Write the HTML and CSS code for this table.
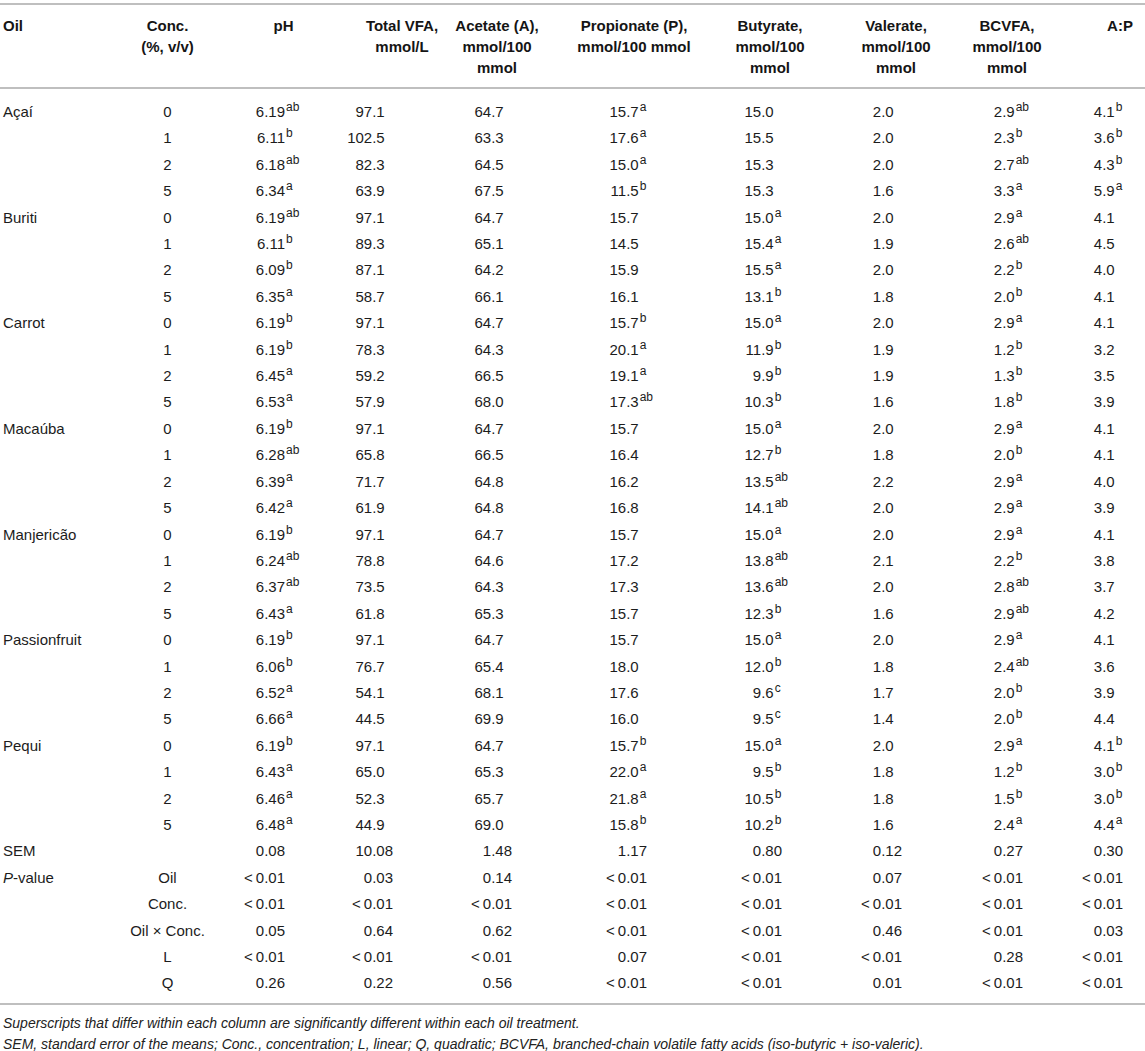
FILE: index.html
```html
<!DOCTYPE html>
<html lang="en">
<head>
<meta charset="utf-8">
<title>Table</title>
<link rel="stylesheet" href="styles.css">
</head>
<body>
<div class="wrap">
<table class="tbl">
<colgroup>
<col class="w-oil"><col class="w-conc"><col class="w-ph"><col class="w-tvfa"><col class="w-ac"><col class="w-pr"><col class="w-bu"><col class="w-va"><col class="w-bc"><col class="w-ap">
</colgroup>
<thead>
<tr>
<th>Oil</th>
<th>Conc.<br>(%, v/v)</th>
<th>pH</th>
<th>Total VFA,<br>mmol/L</th>
<th>Acetate (A),<br>mmol/100<br>mmol</th>
<th>Propionate (P),<br>mmol/100 mmol</th>
<th>Butyrate,<br>mmol/100<br>mmol</th>
<th>Valerate,<br>mmol/100<br>mmol</th>
<th>BCVFA,<br>mmol/100<br>mmol</th>
<th>A:P</th>
</tr>
</thead>
<tbody>
<tr class="d first"><td>Açaí</td><td>0</td><td><span class="n">6.19<sup>ab</sup></span></td><td>97.1</td><td>64.7</td><td><span class="n">15.7<sup>a</sup></span></td><td>15.0</td><td>2.0</td><td><span class="n">2.9<sup>ab</sup></span></td><td><span class="n">4.1<sup>b</sup></span></td></tr>
<tr class="d"><td></td><td>1</td><td><span class="n">6.11<sup>b</sup></span></td><td>102.5</td><td>63.3</td><td><span class="n">17.6<sup>a</sup></span></td><td>15.5</td><td>2.0</td><td><span class="n">2.3<sup>b</sup></span></td><td><span class="n">3.6<sup>b</sup></span></td></tr>
<tr class="d"><td></td><td>2</td><td><span class="n">6.18<sup>ab</sup></span></td><td>82.3</td><td>64.5</td><td><span class="n">15.0<sup>a</sup></span></td><td>15.3</td><td>2.0</td><td><span class="n">2.7<sup>ab</sup></span></td><td><span class="n">4.3<sup>b</sup></span></td></tr>
<tr class="d"><td></td><td>5</td><td><span class="n">6.34<sup>a</sup></span></td><td>63.9</td><td>67.5</td><td><span class="n">11.5<sup>b</sup></span></td><td>15.3</td><td>1.6</td><td><span class="n">3.3<sup>a</sup></span></td><td><span class="n">5.9<sup>a</sup></span></td></tr>

<tr class="d"><td>Buriti</td><td>0</td><td><span class="n">6.19<sup>ab</sup></span></td><td>97.1</td><td>64.7</td><td>15.7</td><td><span class="n">15.0<sup>a</sup></span></td><td>2.0</td><td><span class="n">2.9<sup>a</sup></span></td><td>4.1</td></tr>
<tr class="d"><td></td><td>1</td><td><span class="n">6.11<sup>b</sup></span></td><td>89.3</td><td>65.1</td><td>14.5</td><td><span class="n">15.4<sup>a</sup></span></td><td>1.9</td><td><span class="n">2.6<sup>ab</sup></span></td><td>4.5</td></tr>
<tr class="d"><td></td><td>2</td><td><span class="n">6.09<sup>b</sup></span></td><td>87.1</td><td>64.2</td><td>15.9</td><td><span class="n">15.5<sup>a</sup></span></td><td>2.0</td><td><span class="n">2.2<sup>b</sup></span></td><td>4.0</td></tr>
<tr class="d"><td></td><td>5</td><td><span class="n">6.35<sup>a</sup></span></td><td>58.7</td><td>66.1</td><td>16.1</td><td><span class="n">13.1<sup>b</sup></span></td><td>1.8</td><td><span class="n">2.0<sup>b</sup></span></td><td>4.1</td></tr>

<tr class="d"><td>Carrot</td><td>0</td><td><span class="n">6.19<sup>b</sup></span></td><td>97.1</td><td>64.7</td><td><span class="n">15.7<sup>b</sup></span></td><td><span class="n">15.0<sup>a</sup></span></td><td>2.0</td><td><span class="n">2.9<sup>a</sup></span></td><td>4.1</td></tr>
<tr class="d"><td></td><td>1</td><td><span class="n">6.19<sup>b</sup></span></td><td>78.3</td><td>64.3</td><td><span class="n">20.1<sup>a</sup></span></td><td><span class="n">11.9<sup>b</sup></span></td><td>1.9</td><td><span class="n">1.2<sup>b</sup></span></td><td>3.2</td></tr>
<tr class="d"><td></td><td>2</td><td><span class="n">6.45<sup>a</sup></span></td><td>59.2</td><td>66.5</td><td><span class="n">19.1<sup>a</sup></span></td><td><span class="n">9.9<sup>b</sup></span></td><td>1.9</td><td><span class="n">1.3<sup>b</sup></span></td><td>3.5</td></tr>
<tr class="d"><td></td><td>5</td><td><span class="n">6.53<sup>a</sup></span></td><td>57.9</td><td>68.0</td><td><span class="n">17.3<sup>ab</sup></span></td><td><span class="n">10.3<sup>b</sup></span></td><td>1.6</td><td><span class="n">1.8<sup>b</sup></span></td><td>3.9</td></tr>

<tr class="d"><td>Macaúba</td><td>0</td><td><span class="n">6.19<sup>b</sup></span></td><td>97.1</td><td>64.7</td><td>15.7</td><td><span class="n">15.0<sup>a</sup></span></td><td>2.0</td><td><span class="n">2.9<sup>a</sup></span></td><td>4.1</td></tr>
<tr class="d"><td></td><td>1</td><td><span class="n">6.28<sup>ab</sup></span></td><td>65.8</td><td>66.5</td><td>16.4</td><td><span class="n">12.7<sup>b</sup></span></td><td>1.8</td><td><span class="n">2.0<sup>b</sup></span></td><td>4.1</td></tr>
<tr class="d"><td></td><td>2</td><td><span class="n">6.39<sup>a</sup></span></td><td>71.7</td><td>64.8</td><td>16.2</td><td><span class="n">13.5<sup>ab</sup></span></td><td>2.2</td><td><span class="n">2.9<sup>a</sup></span></td><td>4.0</td></tr>
<tr class="d"><td></td><td>5</td><td><span class="n">6.42<sup>a</sup></span></td><td>61.9</td><td>64.8</td><td>16.8</td><td><span class="n">14.1<sup>ab</sup></span></td><td>2.0</td><td><span class="n">2.9<sup>a</sup></span></td><td>3.9</td></tr>

<tr class="d"><td>Manjericão</td><td>0</td><td><span class="n">6.19<sup>b</sup></span></td><td>97.1</td><td>64.7</td><td>15.7</td><td><span class="n">15.0<sup>a</sup></span></td><td>2.0</td><td><span class="n">2.9<sup>a</sup></span></td><td>4.1</td></tr>
<tr class="d"><td></td><td>1</td><td><span class="n">6.24<sup>ab</sup></span></td><td>78.8</td><td>64.6</td><td>17.2</td><td><span class="n">13.8<sup>ab</sup></span></td><td>2.1</td><td><span class="n">2.2<sup>b</sup></span></td><td>3.8</td></tr>
<tr class="d"><td></td><td>2</td><td><span class="n">6.37<sup>ab</sup></span></td><td>73.5</td><td>64.3</td><td>17.3</td><td><span class="n">13.6<sup>ab</sup></span></td><td>2.0</td><td><span class="n">2.8<sup>ab</sup></span></td><td>3.7</td></tr>
<tr class="d"><td></td><td>5</td><td><span class="n">6.43<sup>a</sup></span></td><td>61.8</td><td>65.3</td><td>15.7</td><td><span class="n">12.3<sup>b</sup></span></td><td>1.6</td><td><span class="n">2.9<sup>ab</sup></span></td><td>4.2</td></tr>

<tr class="d"><td>Passionfruit</td><td>0</td><td><span class="n">6.19<sup>b</sup></span></td><td>97.1</td><td>64.7</td><td>15.7</td><td><span class="n">15.0<sup>a</sup></span></td><td>2.0</td><td><span class="n">2.9<sup>a</sup></span></td><td>4.1</td></tr>
<tr class="d"><td></td><td>1</td><td><span class="n">6.06<sup>b</sup></span></td><td>76.7</td><td>65.4</td><td>18.0</td><td><span class="n">12.0<sup>b</sup></span></td><td>1.8</td><td><span class="n">2.4<sup>ab</sup></span></td><td>3.6</td></tr>
<tr class="d"><td></td><td>2</td><td><span class="n">6.52<sup>a</sup></span></td><td>54.1</td><td>68.1</td><td>17.6</td><td><span class="n">9.6<sup>c</sup></span></td><td>1.7</td><td><span class="n">2.0<sup>b</sup></span></td><td>3.9</td></tr>
<tr class="d"><td></td><td>5</td><td><span class="n">6.66<sup>a</sup></span></td><td>44.5</td><td>69.9</td><td>16.0</td><td><span class="n">9.5<sup>c</sup></span></td><td>1.4</td><td><span class="n">2.0<sup>b</sup></span></td><td>4.4</td></tr>

<tr class="d"><td>Pequi</td><td>0</td><td><span class="n">6.19<sup>b</sup></span></td><td>97.1</td><td>64.7</td><td><span class="n">15.7<sup>b</sup></span></td><td><span class="n">15.0<sup>a</sup></span></td><td>2.0</td><td><span class="n">2.9<sup>a</sup></span></td><td><span class="n">4.1<sup>b</sup></span></td></tr>
<tr class="d"><td></td><td>1</td><td><span class="n">6.43<sup>a</sup></span></td><td>65.0</td><td>65.3</td><td><span class="n">22.0<sup>a</sup></span></td><td><span class="n">9.5<sup>b</sup></span></td><td>1.8</td><td><span class="n">1.2<sup>b</sup></span></td><td><span class="n">3.0<sup>b</sup></span></td></tr>
<tr class="d"><td></td><td>2</td><td><span class="n">6.46<sup>a</sup></span></td><td>52.3</td><td>65.7</td><td><span class="n">21.8<sup>a</sup></span></td><td><span class="n">10.5<sup>b</sup></span></td><td>1.8</td><td><span class="n">1.5<sup>b</sup></span></td><td><span class="n">3.0<sup>b</sup></span></td></tr>
<tr class="d"><td></td><td>5</td><td><span class="n">6.48<sup>a</sup></span></td><td>44.9</td><td>69.0</td><td><span class="n">15.8<sup>b</sup></span></td><td><span class="n">10.2<sup>b</sup></span></td><td>1.6</td><td><span class="n">2.4<sup>a</sup></span></td><td><span class="n">4.4<sup>a</sup></span></td></tr>

<tr class="s"><td>SEM</td><td></td><td>0.08</td><td>10.08</td><td>1.48</td><td>1.17</td><td>0.80</td><td>0.12</td><td>0.27</td><td>0.30</td></tr>
<tr class="s"><td><i>P</i>-value</td><td>Oil</td><td>&lt;&#8201;0.01</td><td>0.03</td><td>0.14</td><td>&lt;&#8201;0.01</td><td>&lt;&#8201;0.01</td><td>0.07</td><td>&lt;&#8201;0.01</td><td>&lt;&#8201;0.01</td></tr>
<tr class="s"><td></td><td>Conc.</td><td>&lt;&#8201;0.01</td><td>&lt;&#8201;0.01</td><td>&lt;&#8201;0.01</td><td>&lt;&#8201;0.01</td><td>&lt;&#8201;0.01</td><td>&lt;&#8201;0.01</td><td>&lt;&#8201;0.01</td><td>&lt;&#8201;0.01</td></tr>
<tr class="s"><td></td><td>Oil &times; Conc.</td><td>0.05</td><td>0.64</td><td>0.62</td><td>&lt;&#8201;0.01</td><td>&lt;&#8201;0.01</td><td>0.46</td><td>&lt;&#8201;0.01</td><td>0.03</td></tr>
<tr class="s"><td></td><td>L</td><td>&lt;&#8201;0.01</td><td>&lt;&#8201;0.01</td><td>&lt;&#8201;0.01</td><td>0.07</td><td>&lt;&#8201;0.01</td><td>&lt;&#8201;0.01</td><td>0.28</td><td>&lt;&#8201;0.01</td></tr>
<tr class="s last"><td></td><td>Q</td><td>0.26</td><td>0.22</td><td>0.56</td><td>&lt;&#8201;0.01</td><td>&lt;&#8201;0.01</td><td>0.01</td><td>&lt;&#8201;0.01</td><td>&lt;&#8201;0.01</td></tr>
</tbody>
</table>
<div class="notes">
<p class="note note-1">Superscripts that differ within each column are significantly different within each oil treatment.</p>
<p class="note note-2">SEM, standard error of the means; Conc., concentration; L, linear; Q, quadratic; BCVFA, branched-chain volatile fatty acids (iso-butyric + iso-valeric).</p>
</div>
</div>
</body>
</html>
```

FILE: styles.css
```css
html, body {
  margin: 0;
  padding: 0;
  background: #ffffff;
}

body {
  font-family: "Liberation Sans", Arial, Helvetica, sans-serif;
  color: #1c1c1c;
}

.wrap {
  padding-top: 3px;
  width: 1145px;
}

.tbl {
  width: 1145px;
  border-collapse: collapse;
  table-layout: fixed;
  font-size: 15px;
}

.w-oil { width: 110px; }
.w-conc { width: 115px; }
.w-ph { width: 117px; }
.w-tvfa { width: 107px; }
.w-ac { width: 117px; }
.w-pr { width: 136px; }
.w-bu { width: 131px; }
.w-va { width: 118px; }
.w-bc { width: 112px; }
.w-ap { width: 82px; }

.tbl thead tr {
  border-top: 2px solid #bfbfbf;
  border-bottom: 2px solid #bfbfbf;
}

.tbl th {
  font-weight: bold;
  text-align: center;
  vertical-align: top;
  white-space: nowrap;
  line-height: 21px;
  padding: 9.5px 0;
  color: #151515;
}

.tbl th:nth-child(1) { text-align: left; padding-left: 3px; }
.tbl th:nth-child(4) { padding-left: 13px; }
.tbl th:nth-child(5) { padding-right: 21px; }
.tbl th:nth-child(7) { padding-left: 5px; }
.tbl th:nth-child(8) { padding-left: 8px; }
.tbl th:nth-child(10) { padding-left: 32px; }

.tbl td {
  line-height: 26.4px;
  padding: 0;
  white-space: nowrap;
  vertical-align: middle;
}

.tbl td:nth-child(1) { text-align: left; padding-left: 3px; }
.tbl td:nth-child(2) { text-align: center; }

.tbl td:nth-child(3) { --pr: 57px; }
.tbl td:nth-child(4) { --pr: 56px; }
.tbl td:nth-child(5) { --pr: 54px; }
.tbl td:nth-child(6) { --pr: 55px; }
.tbl td:nth-child(7) { --pr: 51px; }
.tbl td:nth-child(8) { --pr: 49px; }
.tbl td:nth-child(9) { --pr: 40px; }
.tbl td:nth-child(10) { --pr: 22px; }

.tbl td:nth-child(n+3) {
  text-align: right;
  padding-right: var(--pr);
}

.tbl tr.d td:nth-child(n+4) {
  padding-right: calc(var(--pr) + 0.556em);
}

.tbl tr.first td { padding-top: 10px; }
.tbl tr.last td { padding-bottom: 6px; }
.tbl tr.last { border-bottom: 2px solid #bfbfbf; }

.n {
  position: relative;
}

.n sup {
  position: absolute;
  left: 100%;
  top: -2px;
  font-size: 12px;
  line-height: 1;
  padding-left: 1px;
}

.notes {
  font-style: italic;
  font-size: 14px;
  color: #222;
}

.note {
  margin: 0;
  line-height: 16px;
  padding-left: 3px;
}

.note-1 { margin-top: 10px; }
.note-2 { margin-top: 5px; }
```
